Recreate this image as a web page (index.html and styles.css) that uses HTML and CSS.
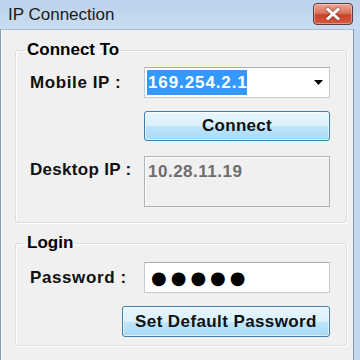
FILE: index.html
```html
<!DOCTYPE html>
<html>
<head>
<meta charset="utf-8">
<link rel="stylesheet" href="styles.css">
</head>
<body>
<div class="window">
  <div class="titlebar">
    <span class="title">IP Connection</span>
    <div class="close">
      <svg width="16" height="12" viewBox="0 0 16 12"><path d="M3 1.5 L13 10.5 M13 1.5 L3 10.5" stroke="#fff" stroke-width="3" stroke-linecap="square"/></svg>
    </div>
  </div>
  <div class="client">
    <fieldset class="group connect">
      <legend>Connect To</legend>
      <div class="row">
        <label class="lbl">Mobile IP :</label>
        <div class="combo">
          <span class="sel">169.254.2.1</span>
          <svg class="arrow" width="9" height="5" viewBox="0 0 9 5"><path d="M0 0 H9 L4.5 5 Z" fill="#000"/></svg>
        </div>
      </div>
      <div class="row">
        <span></span>
        <div class="btn">Connect</div>
      </div>
      <div class="row top">
        <label class="lbl pad">Desktop IP :</label>
        <div class="readonly">10.28.11.19</div>
      </div>
    </fieldset>
    <fieldset class="group login">
      <legend>Login</legend>
      <div class="row">
        <label class="lbl">Password :</label>
        <div class="edit"><span class="dots">●●●●●</span></div>
      </div>
      <div class="row btnrow">
        <div class="btn wide">Set Default Password</div>
      </div>
    </fieldset>
  </div>
</div>
</body>
</html>
```
FILE: styles.css
```css
* { box-sizing: border-box; }
html, body { margin: 0; padding: 0; }
body {
  width: 360px;
  height: 360px;
  overflow: hidden;
  font-family: "Liberation Sans", Arial, sans-serif;
}
.window {
  width: 360px;
  height: 360px;
  background: #c3d7ee;
  padding-right: 6px;
  display: flex;
  flex-direction: column;
}
.titlebar {
  height: 29px;
  flex: none;
  display: flex;
  align-items: flex-start;
  justify-content: space-between;
  background: linear-gradient(#bcd2eb, #c9dcf1);
  margin-right: -6px;
  padding: 0 7px 0 8px;
}
.title {
  font-size: 17px;
  color: #1a1a1a;
  line-height: 29px;
}
.close {
  margin-top: 3px;
  width: 40px;
  height: 22px;
  border: 1px solid #5e3a3a;
  border-radius: 4px;
  background: linear-gradient(#eba594 0%, #dc7560 45%, #c8432a 55%, #d65a40 100%);
  display: flex;
  align-items: center;
  justify-content: center;
  box-shadow: inset 0 0 0 1px rgba(255,255,255,0.35);
}
.close svg { filter: drop-shadow(0 0 1px #6a2a1a); }
.client {
  flex: 1;
  background: #f0f0f0;
  border-left: 1px solid #8497ae;
  border-right: 1px solid #8497ae;
  border-top: 1px solid #a9bdd6;
  box-shadow: inset 1px 0 #ffffff;
  padding: 0 6px 0 14px;
}
.group {
  margin: 10px 0 0 0;
  border: 1px solid #d5dfe5;
  border-radius: 3px;
  box-shadow: inset 1px 1px #fff, 1px 1px #fff;
  padding: 7px 16px 15px 14px;
  min-width: 0;
}
.group legend {
  font-size: 17px;
  font-weight: bold;
  line-height: 20px;
  padding: 0 2px;
  margin-left: -5px;
  color: #000;
}
.login { padding-top: 9px; padding-bottom: 8px; }
.row {
  display: grid;
  grid-template-columns: 1fr 186px;
  align-items: center;
}
.row + .row { margin-top: 13px; }
.row.top { align-items: start; margin-top: 15px; }
.lbl {
  font-size: 17px;
  font-weight: bold;
  color: #111;
  letter-spacing: 0.6px;
}
.lbl.pad { padding-top: 4px; letter-spacing: 0.3px; }
.combo, .edit {
  height: 31px;
  background: #fff;
  border: 1px solid #c5cad3;
  border-top-color: #abadb3;
  display: flex;
  align-items: center;
  padding: 0 2px;
  position: relative;
}
.sel {
  background: #3399ff;
  color: #fff;
  font-size: 17px;
  font-weight: bold;
  line-height: 25px;
  width: 100px;
  padding-left: 1px;
  letter-spacing: 0.9px;
}
.arrow { margin-left: auto; margin-right: 4px; }
.btn {
  height: 30px;
  border: 1px solid #3c7fb1;
  border-radius: 3px;
  background: linear-gradient(#eaf6fd 0%, #d9f0fc 50%, #bee6fd 51%, #a7d9f5 100%);
  box-shadow: inset 0 0 0 1px rgba(255,255,255,0.6);
  font-size: 17px;
  font-weight: bold;
  color: #111;
  display: flex;
  align-items: center;
  justify-content: center;
  letter-spacing: 0.3px;
}
.readonly {
  height: 51px;
  border: 1px solid #adb2b5;
  background: #f0f0f0;
  box-shadow: inset 1px 1px #fff;
  color: #6d6d6d;
  font-size: 17px;
  font-weight: bold;
  padding: 5px 3px;
  letter-spacing: 0.5px;
}
.dots {
  font-family: "DejaVu Sans", sans-serif;
  font-size: 18px;
  letter-spacing: 4px;
  color: #000;
  padding-left: 4px;
}
.btnrow { display: flex; justify-content: flex-end; }
.btn.wide { width: 208px; height: 31px; letter-spacing: 0.4px; }
```
